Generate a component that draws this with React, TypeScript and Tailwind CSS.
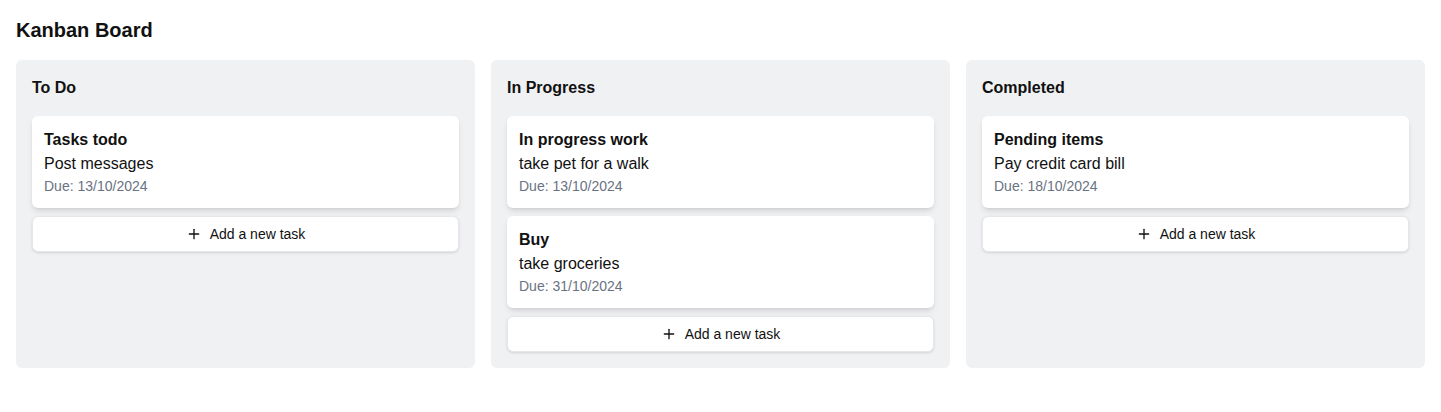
import { Plus } from "lucide-react";

type Task = { id: number; title: string; description: string; due: string };
type Column = { id: string; name: string; tasks: Task[] };

const columns: Column[] = [
  {
    id: "todo",
    name: "To Do",
    tasks: [{ id: 1, title: "Tasks todo", description: "Post messages", due: "13/10/2024" }],
  },
  {
    id: "progress",
    name: "In Progress",
    tasks: [
      { id: 2, title: "In progress work", description: "take pet for a walk", due: "13/10/2024" },
      { id: 3, title: "Buy", description: "take groceries", due: "31/10/2024" },
    ],
  },
  {
    id: "done",
    name: "Completed",
    tasks: [{ id: 4, title: "Pending items", description: "Pay credit card bill", due: "18/10/2024" }],
  },
];

export default function App() {
  return (
    <div className="min-h-screen bg-white p-4 text-[#111] font-['Liberation_Sans',Arial,sans-serif]">
      <h1 className="mb-4 text-xl font-bold">Kanban Board</h1>
      <div className="grid grid-cols-3 gap-4">
        {columns.map((col) => (
          <div key={col.id} className="rounded-md bg-[#f0f1f3] p-4">
            <h2 className="mb-4 text-base font-semibold">{col.name}</h2>
            <div className="space-y-2">
              {col.tasks.map((t) => (
                <div key={t.id} className="rounded-md bg-white p-3 shadow-md">
                  <h3 className="font-bold">{t.title}</h3>
                  <p>{t.description}</p>
                  <p className="text-sm text-gray-500">Due: {t.due}</p>
                </div>
              ))}
              <button className="flex h-9 w-full items-center justify-center gap-2 rounded-md border border-gray-200 bg-white text-sm shadow-sm">
                <Plus size={16} strokeWidth={2} />
                Add a new task
              </button>
            </div>
          </div>
        ))}
      </div>
    </div>
  );
}
